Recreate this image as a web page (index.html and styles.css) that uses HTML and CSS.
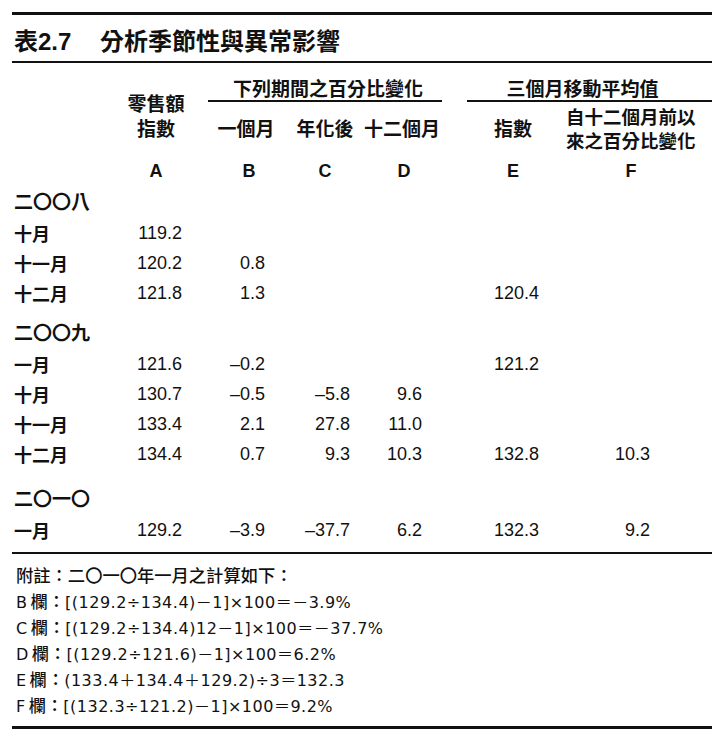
FILE: index.html
```html
<!DOCTYPE html>
<html lang="zh-Hant">
<head>
<meta charset="utf-8">
<title>表2.7 分析季節性與異常影響</title>
<link rel="stylesheet" href="styles.css">
</head>
<body>
<div class="page">
  <h1 class="title"><span class="tno">表2.7</span><span class="tname">分析季節性與異常影響</span></h1>

  <div class="thead">
    <div class="h-a">零售額<br>指數</div>
    <div class="grp g1">下列期間之百分比變化</div>
    <div class="grp g2">三個月移動平均值</div>
    <div class="sub s-b">一個月</div>
    <div class="sub s-c">年化後</div>
    <div class="sub s-d">十二個月</div>
    <div class="sub s-e">指數</div>
    <div class="sub s-f"><div>自十二個月前以</div><div>來之百分比變化</div></div>
    <div class="let l-a">A</div>
    <div class="let l-b">B</div>
    <div class="let l-c">C</div>
    <div class="let l-d">D</div>
    <div class="let l-e">E</div>
    <div class="let l-f">F</div>
  </div>

  <div class="tbody">
    <div class="year y1">二〇〇八</div>
    <div class="row"><span>十月</span><span>119.2</span><span></span><span></span><span></span><span></span><span></span></div>
    <div class="row"><span>十一月</span><span>120.2</span><span>0.8</span><span></span><span></span><span></span><span></span></div>
    <div class="row"><span>十二月</span><span>121.8</span><span>1.3</span><span></span><span></span><span>120.4</span><span></span></div>

    <div class="year y2">二〇〇九</div>
    <div class="row"><span>一月</span><span>121.6</span><span>–0.2</span><span></span><span></span><span>121.2</span><span></span></div>
    <div class="row"><span>十月</span><span>130.7</span><span>–0.5</span><span>–5.8</span><span>9.6</span><span></span><span></span></div>
    <div class="row"><span>十一月</span><span>133.4</span><span>2.1</span><span>27.8</span><span>11.0</span><span></span><span></span></div>
    <div class="row"><span>十二月</span><span>134.4</span><span>0.7</span><span>9.3</span><span>10.3</span><span>132.8</span><span>10.3</span></div>

    <div class="year y3">二〇一〇</div>
    <div class="row"><span>一月</span><span>129.2</span><span>–3.9</span><span>–37.7</span><span>6.2</span><span>132.3</span><span>9.2</span></div>
  </div>

  <div class="notes">
    <p><span class="cj">附註：二〇一〇年一月之計算如下：</span></p>
    <p>B<span class="cj col">欄：</span>[(129.2÷134.4)－1]×100＝－3.9%</p>
    <p>C<span class="cj col">欄：</span>[(129.2÷134.4)12－1]×100＝－37.7%</p>
    <p>D<span class="cj col">欄：</span>[(129.2÷121.6)－1]×100＝6.2%</p>
    <p>E<span class="cj col">欄：</span>(133.4＋134.4＋129.2)÷3＝132.3</p>
    <p>F<span class="cj col">欄：</span>[(132.3÷121.2)－1]×100＝9.2%</p>
  </div>
</div>
</body>
</html>
```

FILE: styles.css
```css
:root {
  --cols: 98px 92px 92px 62px 96px 114px 130px 16px;
}

html, body {
  margin: 0;
  padding: 0;
  background: #fff;
}

body {
  color: #111;
  font-family: "Noto Sans CJK TC", sans-serif;
}

.page {
  width: 700px;
  margin-left: 12px;
  padding-top: 12px;
}

.title {
  margin: 0;
  border-top: 3px solid #111;
  border-bottom: 2px solid #111;
  padding: 8px 0 0 2px;
  height: 38px;
  line-height: 38px;
  font-size: 24px;
  font-weight: 700;
  font-family: "Liberation Sans", "Noto Sans CJK TC", sans-serif;
  white-space: nowrap;
}

.tno {
  display: inline-block;
  width: 86px;
}

/* ---------- header ---------- */
.thead {
  display: grid;
  grid-template-columns: var(--cols);
  grid-template-rows: 39px 51px 33px;
  font-size: 19px;
  font-weight: 600;
  white-space: nowrap;
}

.h-a {
  grid-column: 2;
  grid-row: 1 / 3;
  padding-top: 27px;
  line-height: 25px;
  text-align: center;
}

.grp {
  grid-row: 1;
  margin-top: 13px;
  line-height: 24px;
  border-bottom: 2px solid #111;
  text-align: center;
}

.g1 {
  grid-column: 3 / 6;
  margin-left: 6px;
  margin-right: 10px;
  padding-left: 6px;
}

.g2 {
  grid-column: 6 / 9;
  margin-left: 15px;
  padding-right: 14px;
}

.sub {
  grid-row: 2;
  align-self: center;
  line-height: 24px;
  text-align: center;
}

.s-b { grid-column: 3; padding-right: 4px; }
.s-c { grid-column: 4; }
.s-d { grid-column: 5; padding-right: 4px; }
.s-e { grid-column: 6; padding-left: 8px; }
.s-f { grid-column: 7; padding-right: 10px; font-size: 18.5px; }

.let {
  grid-row: 3;
  padding-top: 6px;
  line-height: 24px;
  text-align: center;
  font-family: "Liberation Sans", sans-serif;
  font-size: 18px;
  font-weight: 700;
}

.l-a { grid-column: 2; }
.l-b { grid-column: 3; padding-left: 2px; }
.l-c { grid-column: 4; }
.l-d { grid-column: 5; }
.l-e { grid-column: 6; padding-left: 8px; }
.l-f { grid-column: 7; }

/* ---------- body ---------- */
.tbody {
  border-bottom: 2px solid #111;
  padding-bottom: 7px;
}

.year {
  padding-left: 2px;
  line-height: 30px;
  padding-bottom: 2px;
  font-size: 19px;
  font-weight: 600;
}

.y1 { padding-top: 0; }
.y2 { padding-top: 9px; }
.y3 { padding-top: 14px; }

.row {
  display: grid;
  grid-template-columns: var(--cols);
  height: 30px;
  line-height: 30px;
  font-family: "Liberation Sans", sans-serif;
  font-size: 18px;
}

.row > span {
  text-align: right;
  white-space: nowrap;
}

.row > span:nth-child(1) {
  text-align: left;
  padding-left: 2px;
  font-family: "Noto Sans CJK TC", sans-serif;
  font-weight: 600;
}

.row > span:nth-child(2) { padding-right: 20px; }
.row > span:nth-child(3) { padding-right: 29px; }
.row > span:nth-child(4) { padding-right: 6px; }
.row > span:nth-child(5) { padding-right: 30px; }
.row > span:nth-child(6) { padding-right: 27px; }
.row > span:nth-child(7) { padding-right: 46px; }

/* ---------- notes ---------- */
.notes {
  padding: 10px 0 6px 4px;
  border-bottom: 3px solid #111;
  font-family: "DejaVu Sans", "Noto Sans CJK TC", sans-serif;
  font-size: 16px;
  letter-spacing: 0.5px;
}

.notes p {
  margin: 0;
  height: 26px;
  line-height: 26px;
  white-space: nowrap;
}

.cj {
  font-family: "Noto Sans CJK TC", sans-serif;
  font-size: 17.3px;
  font-weight: 500;
  letter-spacing: 0;
  line-height: 1;
}

.col {
  margin-left: 3px;
}
```
